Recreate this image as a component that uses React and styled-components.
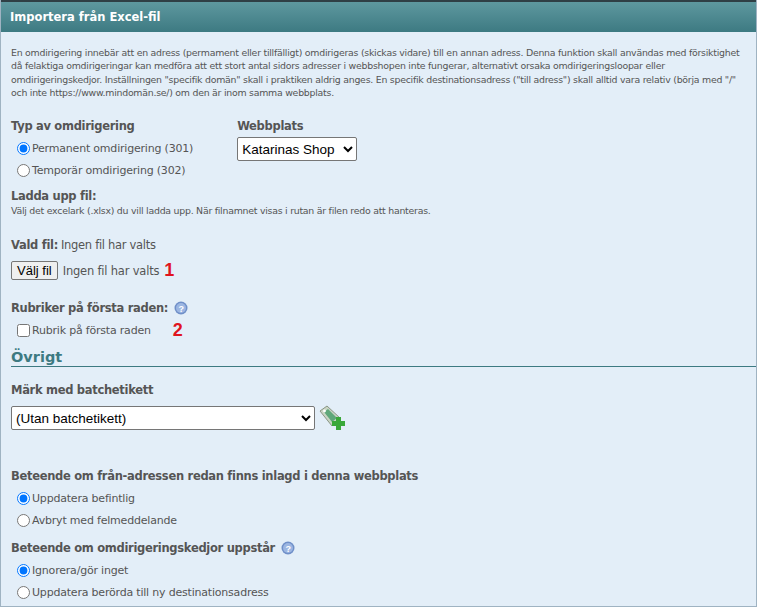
import React from "react";
import styled, { createGlobalStyle } from "styled-components";

const Global = createGlobalStyle`
  body { margin: 0; background: #fff; font-family: "DejaVu Sans", Verdana, sans-serif; }
`;

const Panel = styled.div`
  width: 755px;
  height: 606px;
  background: #e3eef8;
  border: 1px solid #9fb3c2;
  border-top: none;
  overflow: hidden;
`;

const Header = styled.div`
  height: 30px;
  background: linear-gradient(#5e989f, #3d7a82);
  border-top: 2px solid #2f3f45;
  color: #fff;
  font-weight: bold;
  font-size: 11.5px;
  line-height: 30px;
  padding-left: 9px;
`;

const Body = styled.div`
  padding: 14px 9px 0 10px;
  color: #555;
`;

const Intro = styled.p`
  margin: 0 0 20px;
  font-size: 9.4px;
  letter-spacing: -0.25px;
  line-height: 13.3px;
`;

const Row = styled.div`
  display: flex;
  gap: 44px;
`;

const Label = styled.div`
  font-weight: bold;
  font-size: 11.5px;
  letter-spacing: -0.3px;
  margin: ${p => p.$mt || 0}px 0 4px;
  display: flex;
  align-items: center;
  gap: 6px;
`;

const Option = styled.label`
  display: flex;
  align-items: center;
  font-size: 11px;
  letter-spacing: -0.2px;
  height: 22px;
  input { margin: 0 2px 0 ${p => p.$indent ? 6 : 0}px; width: 13px; height: 13px; }
`;

const Small = styled.div`
  font-size: 9.4px;
  letter-spacing: -0.25px;
  margin-top: -2px;
`;

const Marker = styled.span`
  color: #e0141e;
  font: bold 18px "Liberation Sans", Arial, sans-serif;
  margin-left: ${p => p.$ml}px;
`;

const FileRow = styled.div`
  display: flex;
  align-items: center;
  font-size: 11.5px;
  letter-spacing: -0.2px;
  margin-top: 8px;
  button {
    font: 13px "Liberation Sans", Arial, sans-serif;
    padding: 1px 5px;
    margin-right: 5px;
    border: 1px solid #767676;
    border-radius: 2px;
    background: #efefef;
  }
`;

const Section = styled.div`
  color: #3d7a82;
  font-weight: bold;
  font-size: 14.5px;
  border-bottom: 1px solid #3d7a82;
  margin: 8px -9px 0 0;
  padding-bottom: 1px;
`;

const Select = styled.select`
  font: 13.5px "Liberation Sans", Arial, sans-serif;
  background: #fff;
  border: 1px solid #767676;
  border-radius: 2px;
  height: 24px;
  width: ${p => p.$w}px;
  color: #000;
`;

const SelectRow = styled.div`
  display: flex;
  align-items: center;
  gap: 3px;
  margin-top: 8px;
`;

const Help = () => (
  <svg width="14" height="14" viewBox="0 0 14 14">
    <circle cx="7" cy="7" r="6.5" fill="#6f8fc8" />
    <circle cx="7" cy="7" r="5" fill="#9cb6e2" />
    <text x="7" y="10.5" fontSize="9" fontWeight="bold" textAnchor="middle" fill="#fff" fontFamily="Liberation Sans">?</text>
  </svg>
);

const Tag = () => (
  <svg width="28" height="26" viewBox="0 0 28 26">
    <path d="M2 6 L9 1 L22 13 L14 21 Z" fill="#c9d4c4" stroke="#8a9685" />
    <path d="M6 7 L10 4 L19 13 L14 17 Z" fill="#5fa77a" />
    <circle cx="6.5" cy="6" r="1.4" fill="#fff" />
    <rect x="18" y="12" width="5" height="13" fill="#3aa83a" />
    <rect x="14" y="16" width="13" height="5" fill="#3aa83a" />
  </svg>
);

export default function App() {
  return (
    <>
      <Global />
      <Panel>
        <Header>Importera från Excel-fil</Header>
        <Body>
          <Intro>
            En omdirigering innebär att en adress (permament eller tillfälligt) omdirigeras (skickas vidare) till en annan adress. Denna funktion skall användas med försiktighet då felaktiga omdirigeringar kan medföra att ett stort antal sidors adresser i webbshopen inte fungerar, alternativt orsaka omdirigeringsloopar eller omdirigeringskedjor. Inställningen "specifik domän" skall i praktiken aldrig anges. En specifik destinationsadress ("till adress") skall alltid vara relativ (börja med "/" och inte https://www.mindomän.se/) om den är inom samma webbplats.
          </Intro>
          <Row>
            <div>
              <Label>Typ av omdirigering</Label>
              <Option $indent><input type="radio" name="t" defaultChecked />Permanent omdirigering (301)</Option>
              <Option $indent><input type="radio" name="t" />Temporär omdirigering (302)</Option>
            </div>
            <div>
              <Label>Webbplats</Label>
              <Select $w={120}><option>Katarinas Shop</option></Select>
            </div>
          </Row>
          <Label $mt={8}>Ladda upp fil:</Label>
          <Small>Välj det excelark (.xlsx) du vill ladda upp. När filnamnet visas i rutan är filen redo att hanteras.</Small>
          <Label $mt={22}>Vald fil: <span style={{ fontWeight: "normal", marginLeft: -3 }}>Ingen fil har valts</span></Label>
          <FileRow><button>Välj fil</button>Ingen fil har valts<Marker $ml={5}>1</Marker></FileRow>
          <Label $mt={20}>Rubriker på första raden: <Help /></Label>
          <Option $indent><input type="checkbox" />Rubrik på första raden<Marker $ml={22}>2</Marker></Option>
          <Section>Övrigt</Section>
          <Label $mt={16}>Märk med batchetikett</Label>
          <SelectRow>
            <Select $w={304}><option>(Utan batchetikett)</option></Select>
            <Tag />
          </SelectRow>
          <Label $mt={38}>Beteende om från-adressen redan finns inlagd i denna webbplats</Label>
          <Option $indent><input type="radio" name="b" defaultChecked />Uppdatera befintlig</Option>
          <Option $indent><input type="radio" name="b" />Avbryt med felmeddelande</Option>
          <Label $mt={10}>Beteende om omdirigeringskedjor uppstår <Help /></Label>
          <Option $indent><input type="radio" name="c" defaultChecked />Ignorera/gör inget</Option>
          <Option $indent><input type="radio" name="c" />Uppdatera berörda till ny destinationsadress</Option>
        </Body>
      </Panel>
    </>
  );
}
